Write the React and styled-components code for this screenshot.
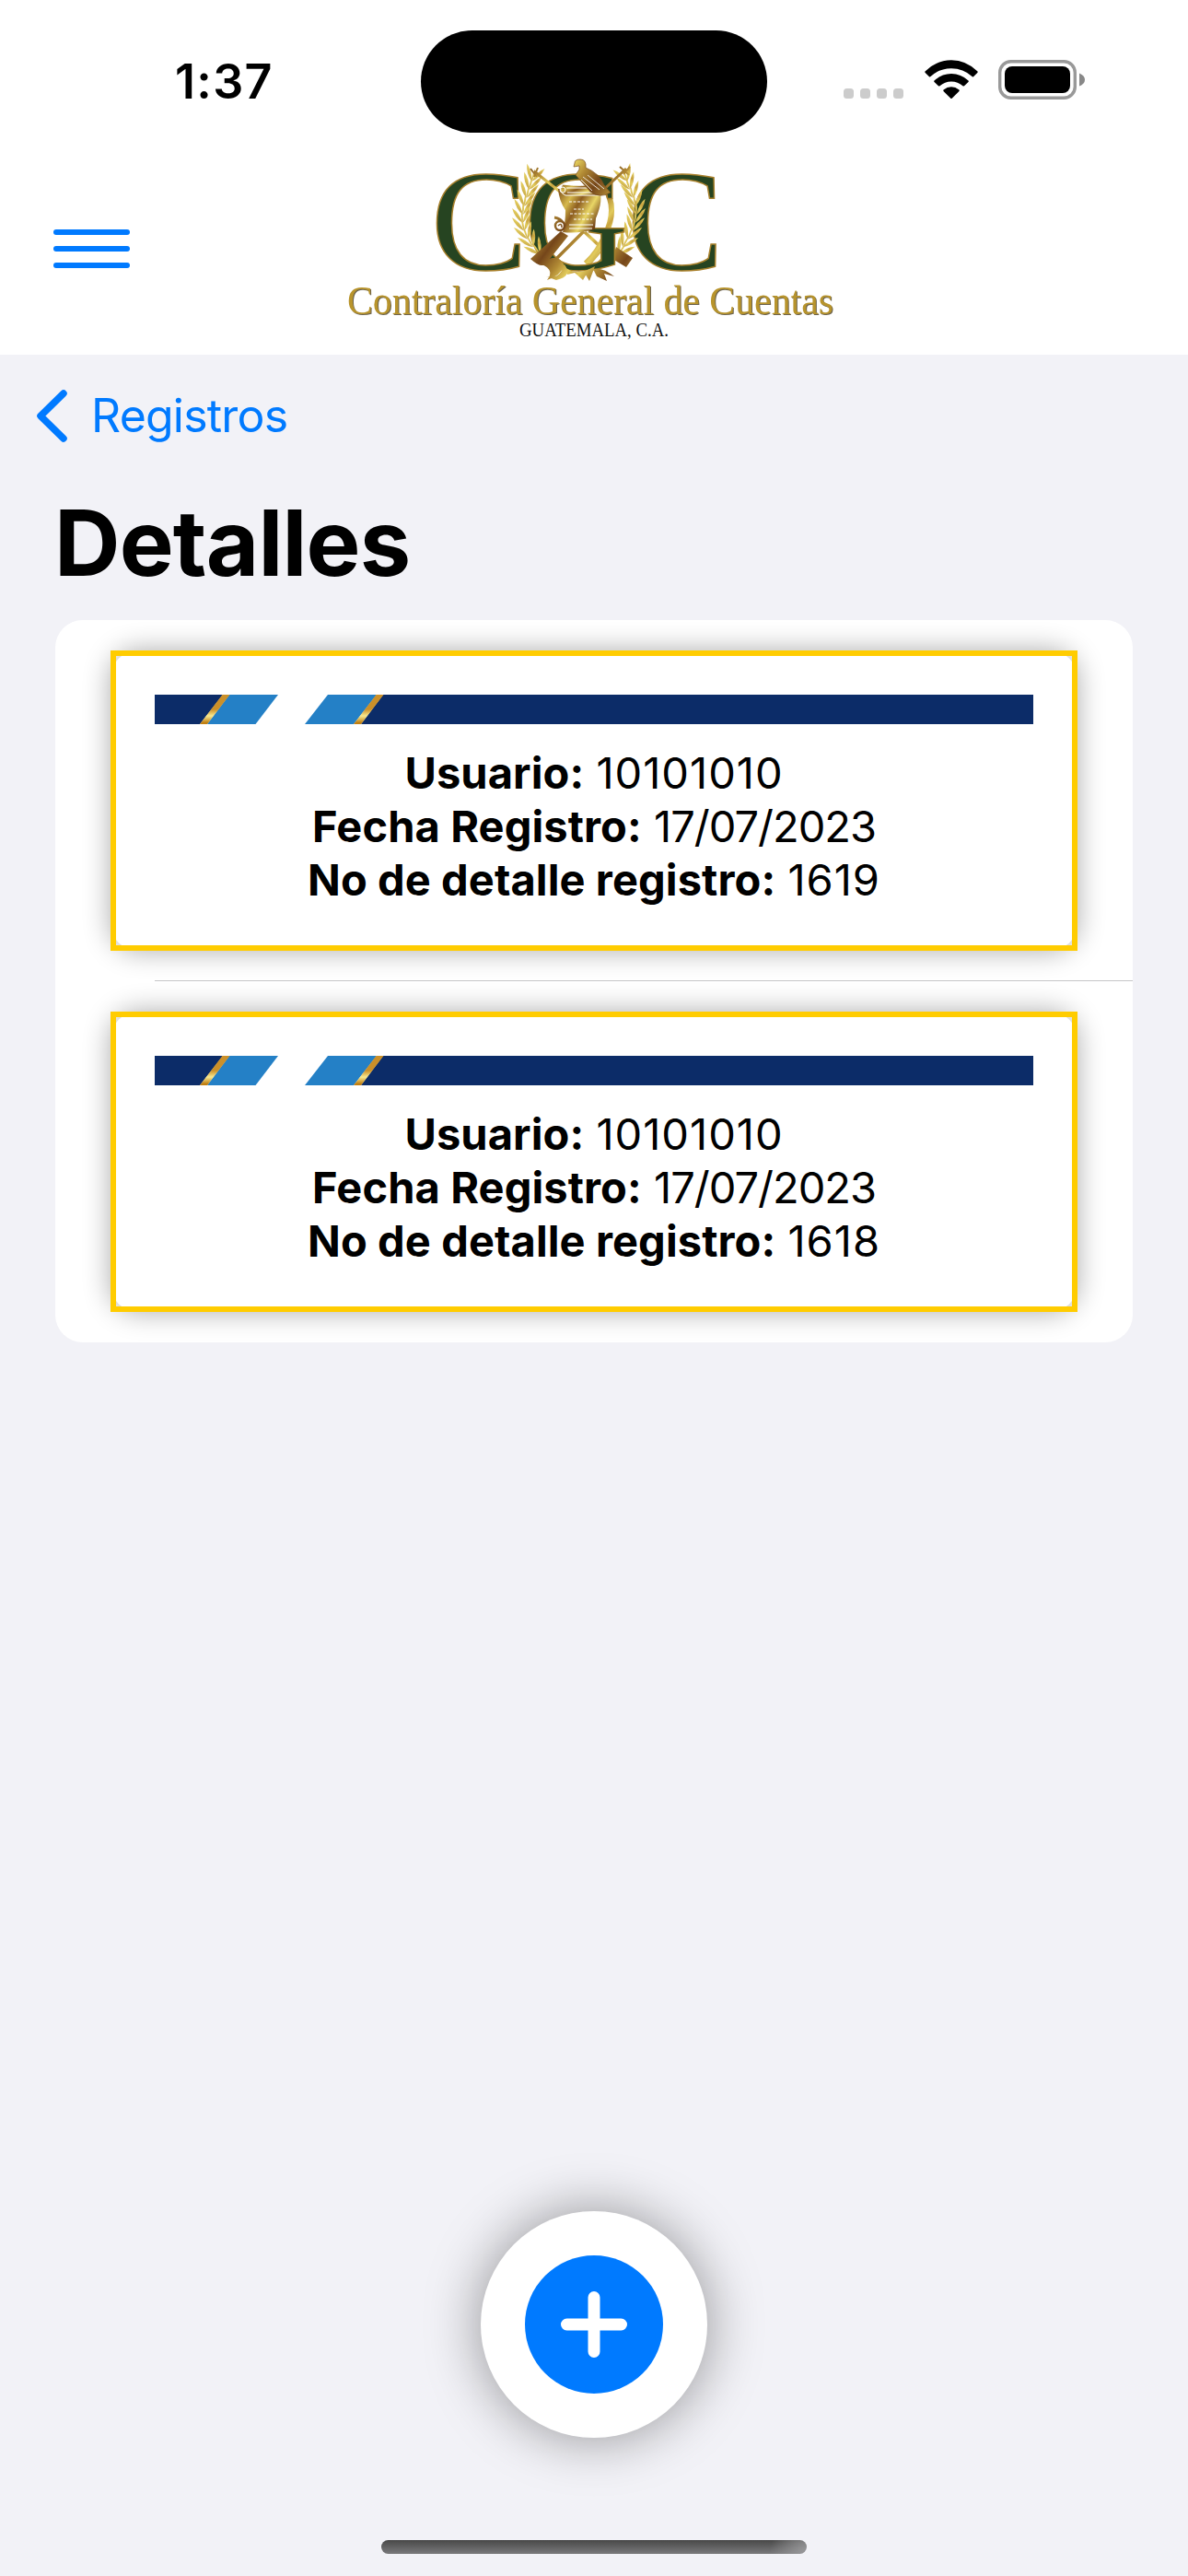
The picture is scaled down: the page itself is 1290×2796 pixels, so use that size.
import styled, { createGlobalStyle } from 'styled-components';

const records = [
  { id: 1619, user: '10101010', date: '17/07/2023' },
  { id: 1618, user: '10101010', date: '17/07/2023' },
];

// points run from the tip of the branch to its base: [x, y, direction]
const leftBranch = [
  [579, 191, -75],
  [576, 200, -75],
  [573, 209, -78],
  [570, 218, -82],
  [568, 227, -88],
  [567, 236, -95],
  [568, 245, -102],
  [571, 254, -110],
  [576, 263, -118],
  [583, 271, -125],
];

const rightBranch = [
  [679, 191, -112],
  [682, 200, -108],
  [686, 209, -103],
  [689, 218, -98],
  [691, 227, -92],
  [690, 236, -85],
  [688, 245, -78],
  [684, 254, -70],
  [679, 263, -62],
  [675, 271, -55],
];

const Branch = ({ points }) =>
  points.map(([x, y, angle]) => (
    <g key={y} transform={`translate(${x} ${y}) rotate(${angle})`}>
      <path d="M-6 0Q2-2 8 0Q2 2-6 0Z" />
      <path d="M-6 0Q0-8 11-10Q6-3-6 0Z" />
      <path d="M-6 0Q0 8 11 10Q6 3-6 0Z" />
    </g>
  ));

const Logo = () => (
  <LogoImage viewBox="370 165 545 215">
    <defs>
      <linearGradient
        id="gold"
        gradientUnits="userSpaceOnUse"
        x1="562"
        y1="190"
        x2="592"
        y2="212"
        spreadMethod="reflect"
      >
        <stop offset="0" stopColor="#75461a" />
        <stop offset="0.5" stopColor="#b18a34" />
        <stop offset="0.85" stopColor="#e2cb5c" />
        <stop offset="1" stopColor="#c8a340" />
      </linearGradient>
      <linearGradient id="paper" x1="0" y1="0" x2="1" y2="0.6">
        <stop offset="0" stopColor="#7b4a18" />
        <stop offset="0.3" stopColor="#d6b94c" />
        <stop offset="0.5" stopColor="#8c5c20" />
        <stop offset="0.75" stopColor="#e9d666" />
        <stop offset="1" stopColor="#744418" />
      </linearGradient>
    </defs>

    <Initial x="468" y="292">
      C
    </Initial>
    <Initial x="681" y="292">
      C
    </Initial>

    <g fill="url(#gold)">
      <Branch points={rightBranch} />
      <path d="M669 268L687 280L680 290L665 281Z" />
    </g>
    <g stroke="url(#gold)" fill="none">
      <path d="M635 252L668 283M634 251L604 281" strokeWidth="3.5" />
      <path d="M655 201Q672 225 657 255Q650 273 636 286" strokeWidth="6" />
      <path d="M637 291L659 265M643 292L659 275" strokeWidth="2" />
    </g>

    <Initial x="569" y="292">
      G
    </Initial>

    <g fill="url(#gold)">
      <Branch points={leftBranch} />
      <path d="M588 287Q604 272 613 288Q609 299 594 304Q603 293 588 287ZM590 299Q607 306 613 287Q622 300 604 304ZM612 288Q622 300 640 292L633 304L624 296L616 298ZM634 295L646 289L640 305ZM644 292Q655 290 667 300L656 297L659 305L648 300Z" />
      <path d="M609 251L617 256L593 286Q588 292 576 281Z" />
    </g>
    <g stroke="url(#gold)" fill="none">
      <path d="M580 186L608 208M680 183L652 209" strokeWidth="3" />
      <path d="M576 183L583 192M584 182L580 192M673 181L683 190M684 181L677 189" strokeWidth="2" />
      <path d="M602 236Q609 237 612 243" strokeWidth="3" />
    </g>

    <path
      d="M606 205Q607 218 614 228Q614 243 611 252Q626 254 646 249L647 237Q656 216 650 205Z"
      fill="url(#paper)"
    />
    <path
      d="M611 200Q632 203 652 199Q660 205 652 212H614Q605 208 611 200Z"
      fill="url(#paper)"
      stroke="#fff"
    />
    <g stroke="#fff" fill="none">
      <path d="M615 204H640M616 209H649" />
      <circle cx="611" cy="206" r="3" />
      <path d="M618 219H639M623 227H634M619 232H646M623 238H643" strokeDasharray="3 1.5" />
      <path d="M618 244H644M618 248H643" />
    </g>
    <g stroke="url(#gold)" strokeWidth="2.5" fill="#fff">
      <circle cx="608" cy="245" r="5" />
      <path d="M606 245Q610 241 610 247" fill="none" strokeWidth="1.5" />
    </g>

    <path
      d="M624 177Q624 173 630 173Q637 173 636 182Q651 188 656 201L663 209Q651 216 641 208L625 190L629 184V180L623 181Z"
      fill="url(#gold)"
      stroke="#794c1c"
      strokeWidth="0.7"
    />
    <path d="M633 192L651 206M631 195L643 207M638 190L656 205" stroke="#fff" strokeWidth="0.8" />

    <Name x="377" y="341" textLength="528" lengthAdjust="spacingAndGlyphs">
      Contraloría General de Cuentas
    </Name>
    <Country x="564" y="365" textLength="162" lengthAdjust="spacingAndGlyphs">
      GUATEMALA, C.A.
    </Country>
  </LogoImage>
);

const WifiIcon = () => (
  <svg width="58" height="43" viewBox="0 0 58 43">
    <path d="M0.5 12.5Q13 0.3 29 0.3T57.5 12.5Q58 13.2 57.3 14L53 18.2Q52.3 18.8 51.5 18Q42 9.2 29 9.2T6.5 18Q5.7 18.8 5 18.2L0.7 14Q0 13.2 0.5 12.5Z" />
    <path d="M10.5 22.5Q18.5 15 29 15T47.5 22.5Q48.1 23.2 47.5 24L43 28.2Q42.2 28.8 41.5 28.2Q36 23.5 29 23.5T16.5 28.2Q15.8 28.8 15 28.2L10.5 24Q9.9 23.2 10.5 22.5Z" />
    <path d="M20.5 32.5Q24.5 29.2 29 29.2T37.5 32.5Q38 33.2 37.5 34L29.7 41.8Q29 42.4 28.3 41.8L20.5 34Q20 33.2 20.5 32.5Z" />
  </svg>
);

const BatteryIcon = () => (
  <svg width="95" height="43" viewBox="0 0 95 43">
    <rect x="1.7" y="1.7" width="81.6" height="39.6" rx="12" fill="none" stroke="#999" strokeWidth="3.4" />
    <rect x="7" y="7" width="71" height="29" rx="8" />
    <path d="M88 14.5Q94 17 94 21.5T88 28.5Z" fill="#888" />
  </svg>
);

const Ribbon = () => (
  <RibbonImage viewBox="0 0 954 32">
    <defs>
      <linearGradient id="stripe" x1="0" y1="0" x2="0" y2="1">
        <stop offset="0.5" stopColor="#cb9029" />
        <stop offset="0.72" stopColor="#f9ea90" />
        <stop offset="0.95" stopColor="#c07f12" />
      </linearGradient>
    </defs>
    <path d="M0 0H74L49 32H0Z" fill="#0c2c68" />
    <path d="M81 0H134L109.5 32H57Z" fill="#2480c6" />
    <path d="M73.5 0H81.5L57 32H49Z" fill="url(#stripe)" />
    <path d="M188 0H241L216 32H163Z" fill="#2480c6" />
    <path d="M248 0H954V32H224Z" fill="#0c2c68" />
    <path d="M240.5 0H248.5L224 32H216Z" fill="url(#stripe)" />
  </RibbonImage>
);

const App = () => (
  <Screen>
    <GlobalStyle />
    <Header>
      <StatusBar>
        <Time>1:37</Time>
        <Island />
        <StatusIcons>
          <Signal>
            <SignalDot />
            <SignalDot />
            <SignalDot />
            <SignalDot />
          </Signal>
          <WifiIcon />
          <BatteryIcon />
        </StatusIcons>
      </StatusBar>
      <TopBar>
        <MenuButton aria-label="Menú">
          <MenuLine />
          <MenuLine />
          <MenuLine />
        </MenuButton>
        <Logo />
      </TopBar>
    </Header>

    <BackButton>
      <svg width="33" height="57" viewBox="0 0 33 57">
        <path
          d="M29 4L4 28.5L29 53"
          fill="none"
          stroke="#007aff"
          strokeWidth="7.5"
          strokeLinecap="round"
          strokeLinejoin="round"
        />
      </svg>
      Registros
    </BackButton>

    <Title>Detalles</Title>

    <List>
      {records.map(({ id, user, date }) => (
        <Item key={id}>
          <Card>
            <Ribbon />
            <Fields>
              <Field>
                <Label>Usuario:</Label> <Value>{user}</Value>
              </Field>
              <Field>
                <Label>Fecha Registro:</Label> <Value $tight>{date}</Value>
              </Field>
              <Field>
                <Label>No de detalle registro:</Label> <Value>{id}</Value>
              </Field>
            </Fields>
          </Card>
        </Item>
      ))}
    </List>

    <Footer>
      <AddButton aria-label="Agregar">
        <svg width="150" height="150" viewBox="0 0 150 150">
          <circle cx="75" cy="75" r="75" fill="#007aff" />
          <path d="M45.5 75H104.5M75 45.5V104.5" stroke="#fff" strokeWidth="13" strokeLinecap="round" />
        </svg>
      </AddButton>
      <HomeIndicator />
    </Footer>
  </Screen>
);

const GlobalStyle = createGlobalStyle`
  * {
    box-sizing: border-box;
  }

  body {
    margin: 0;
    background: #f2f2f7;
    font-family: Inter, "Liberation Sans", sans-serif;
  }
`;

const Screen = styled.div`
  display: flex;
  flex-direction: column;
  width: 1290px;
  height: 2796px;
  overflow: hidden;
  background: #f2f2f7;
  color: #000;
`;

const Header = styled.header`
  height: 385px;
  background: #fff;
`;

const StatusBar = styled.div`
  display: grid;
  grid-template-columns: 457px 376px 1fr;
  height: 165px;
  padding-top: 33px;
`;

const Time = styled.div`
  padding: 25px 0 0 190px;
  font-weight: 600;
  font-size: 52px;
  line-height: 62px;
  letter-spacing: 1.3px;
`;

const Island = styled.div`
  height: 111px;
  border-radius: 56px;
  background: #000;
`;

const StatusIcons = styled.div`
  display: flex;
  align-items: flex-end;
  height: 75px;
  padding-left: 83px;

  svg + svg {
    margin-left: 22px;
  }
`;

const Signal = styled.div`
  display: flex;
  gap: 7px;
  margin-right: 23px;
  padding-bottom: 1px;
`;

const SignalDot = styled.span`
  width: 11px;
  height: 11px;
  border-radius: 3.5px;
  background: #ccc;
`;

const TopBar = styled.div`
  display: flex;
  align-items: flex-start;
  padding-left: 58px;
`;

const MenuButton = styled.button`
  display: flex;
  flex-direction: column;
  gap: 12px;
  margin: 84px 229px 0 0;
  padding: 0;
  border: 0;
  background: none;
`;

const MenuLine = styled.span`
  width: 83px;
  height: 6px;
  border-radius: 3px;
  background: #007aff;
`;

const LogoImage = styled.svg`
  width: 545px;
  height: 215px;
  overflow: visible;
`;

const Initial = styled.text`
  fill: #264421;
  stroke: #a8802c;
  stroke-width: 1.5px;
  font-family: "Liberation Serif", serif;
  font-size: 157px;
`;

const Name = styled.text`
  fill: #b8942c;
  filter: drop-shadow(1px 1px 0 #6b6350);
  font-family: "Liberation Serif", serif;
  font-size: 44px;
`;

const Country = styled.text`
  fill: #111;
  font-family: "Liberation Serif", serif;
  font-size: 20px;
`;

const BackButton = styled.button`
  display: flex;
  align-items: center;
  gap: 26px;
  height: 132px;
  padding: 0 0 0 40px;
  border: 0;
  background: none;
  color: #007aff;
  font-family: inherit;
  font-size: 50px;
  letter-spacing: -0.8px;
`;

const Title = styled.h1`
  margin: 0;
  padding: 12px 0 0 59px;
  height: 156px;
  font-weight: 700;
  font-size: 99px;
  line-height: 120px;
  letter-spacing: -0.8px;
`;

const List = styled.ul`
  margin: 0 60px;
  padding: 0;
  overflow: hidden;
  border-radius: 30px;
  background: #fff;
  list-style: none;
`;

const Item = styled.li`
  height: 392px;
  padding: 33px 60px;

  &:not(:last-child) {
    background: linear-gradient(#c6c6c8, #c6c6c8) 108px 100% / 100% 1px no-repeat;
  }
`;

/* border-image keeps the frame square while the white fill stays rounded */
const Card = styled.article`
  height: 326px;
  padding: 42px;
  border: 6px solid #fc0;
  border-image: linear-gradient(#fc0, #fc0) 1;
  border-radius: 30px;
  background: #fff;
  box-shadow: 0 0 30px rgba(0, 0, 0, 0.33);
`;

const RibbonImage = styled.svg`
  display: block;
  width: 954px;
  height: 32px;
`;

const Fields = styled.div`
  padding-top: 24px;
`;

const Field = styled.p`
  margin: 0;
  font-size: 47px;
  line-height: 58px;
  text-align: center;
  white-space: nowrap;
`;

const Label = styled.strong`
  font-weight: 700;
  letter-spacing: 0.1px;
`;

const Value = styled.span`
  font-weight: 400;
  letter-spacing: ${(p) => (p.$tight ? '-1px' : '1px')};
`;

const Footer = styled.footer`
  display: flex;
  flex-direction: column;
  align-items: center;
  margin-top: auto;
  padding-bottom: 24px;
`;

const AddButton = styled.button`
  display: flex;
  align-items: center;
  justify-content: center;
  width: 246px;
  height: 246px;
  margin-bottom: 111px;
  padding: 0;
  border: 0;
  border-radius: 50%;
  background: #fff;
  box-shadow: 0 0 60px rgba(0, 0, 0, 0.4);
`;

const HomeIndicator = styled.div`
  width: 462px;
  height: 15px;
  border-radius: 8px;
  background:
    radial-gradient(circle at 100% 100%, #9a9a9c, transparent 40px),
    linear-gradient(#484848, #7a7a7c);
`;

export default App;
